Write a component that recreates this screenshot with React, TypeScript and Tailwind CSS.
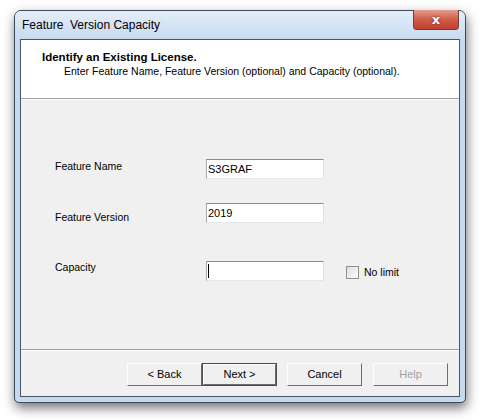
import React from 'react';

const font = { fontFamily: '"Liberation Sans", Arial, sans-serif' };

const Field = ({ label, value, labelOffset, caret }: { label: string; value: string; labelOffset: string; caret?: boolean }) => (
  <div className="flex items-start h-[20px]">
    <div className={`w-[151px] pl-[34px] box-content text-[10.5px] leading-[14px] ${labelOffset}`}>{label}</div>
    <div className="w-[118px] h-[20px] bg-white border border-t-[#8a8b8c] border-l-[#a7a8a9] border-r-[#dfe0e1] border-b-[#e6e7e8] flex items-center pl-[1px] text-[11px]">
      {caret ? <span className="w-[1px] h-[14px] bg-black" /> : value}
    </div>
  </div>
);

const Btn = ({ label, primary, disabled }: { label: string; primary?: boolean; disabled?: boolean }) => (
  <div className={`w-[75px] h-[23px] ${primary ? 'border border-[#4b4b4b]' : ''}`}>
    <div
      className={`w-full h-full flex items-center justify-center bg-[#f0f0f0] border border-t-white border-l-white border-r-[#6d6d6d] border-b-[#6d6d6d] text-[11px] ${
        disabled ? 'text-[#a3a3a3]' : 'text-black'
      }`}
    >
      {label}
    </div>
  </div>
);

export default function App() {
  return (
    <div className="w-[482px] h-[420px] bg-white pt-[10px] pl-[14px] overflow-hidden" style={font}>
      <div className="w-[452px] h-[393px] border border-[#3d4a59] rounded-t-[7px] rounded-b-[5px] bg-[#c5d9f0] shadow-[1px_5px_12px_rgba(0,0,0,0.55)] flex flex-col">
        {/* title bar */}
        <div className="h-[28px] flex items-start justify-between rounded-t-[6px] bg-gradient-to-b from-[#e4eef9] to-[#c7daf0]">
          <div className="pl-[7px] pt-[6px] text-[12px] leading-[16px] text-black">Feature&nbsp;&nbsp;Version Capacity</div>
          <div className="mr-[6px] -mt-[1px] w-[46px] h-[20px] rounded-b-[4px] border border-[#7d3a33] border-t-0 bg-gradient-to-b from-[#e59c8d] via-[#cf5b49] to-[#c2412f] flex items-center justify-center">
            <span className="text-white font-bold text-[13px] leading-none [text-shadow:0_0_2px_#5a1a12]" style={{ fontFamily: '"DejaVu Sans", sans-serif' }}>
              x
            </span>
          </div>
        </div>
        {/* client */}
        <div className="mx-[5px] w-[440px] h-[358px] border border-[#4a5563] bg-[#f0f0f0] flex flex-col">
          <div className="h-[58px] bg-white pt-[10px] text-black">
            <div className="pl-[21px] text-[11.5px] leading-[14px] font-bold">Identify an Existing License.</div>
            <div className="pl-[43px] text-[10.5px] leading-[15px]">
              Enter Feature Name, Feature Version (optional) and Capacity (optional).
            </div>
          </div>
          <div className="h-[1px] bg-[#a0a0a0]" />
          <div className="h-[1px] bg-white" />
          <div className="h-[249px] pt-[59px] flex flex-col text-black">
            <Field label="Feature Name" value="S3GRAF" labelOffset="mt-0" />
            <div className="h-[24px]" />
            <Field label="Feature Version" value="2019" labelOffset="mt-[7px]" />
            <div className="h-[38px]" />
            <div className="flex items-start">
              <Field label="Capacity" value="" labelOffset="-mt-[1px]" caret />
              <div className="ml-[22px] mt-[4px] flex items-center gap-[5px]">
                <div className="w-[13px] h-[13px] border border-[#8e8f8f] bg-gradient-to-br from-[#dcdcdc] to-white" />
                <span className="text-[10.5px]">No limit</span>
              </div>
            </div>
          </div>
          <div className="h-[1px] bg-[#a0a0a0]" />
          <div className="h-[1px] bg-white" />
          <div className="flex-1 pt-[12px] pr-[11px] flex justify-end items-start">
            <Btn label="< Back" />
            <Btn label="Next >" primary />
            <div className="w-[10px]" />
            <Btn label="Cancel" />
            <div className="w-[11px]" />
            <Btn label="Help" disabled />
          </div>
        </div>
      </div>
    </div>
  );
}
